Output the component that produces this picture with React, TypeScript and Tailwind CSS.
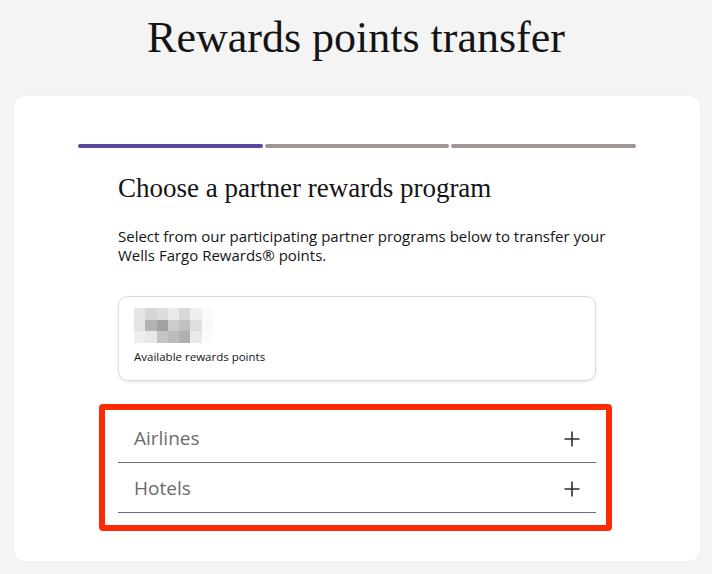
import React from "react";

const blur = [
  ["#e6e6e6", "#d6d6d6", "#dcdcdc", "#eaeaea", "#d8d8d8", "#eeeeee", "#fafafa", "#ffffff"],
  ["#e4e4e4", "#b2b2b2", "#a2a2a2", "#cccccc", "#c0c0c0", "#dedede", "#f8f8f8", "#ffffff"],
  ["#eeeeee", "#e8e8e8", "#c4c4c4", "#bcbcbc", "#b0b0b0", "#eaeaea", "#fcfcfc", "#ffffff"],
];

function Plus() {
  return (
    <svg width="16" height="16" viewBox="0 0 16 16" fill="none">
      <path d="M8 0.5V15.5M0.5 8H15.5" stroke="#2e2e2e" strokeWidth="1.6" />
    </svg>
  );
}

export default function App() {
  return (
    <div className="min-h-[574px] bg-[#f4f4f4] pt-[12px] pb-[12px]">
      <h1
        className="text-center text-[44px] leading-[52px] text-[#141414]"
        style={{ fontFamily: '"Liberation Serif", serif' }}
      >
        Rewards points transfer
      </h1>
      <div className="mt-[32px] ml-[14px] mr-[12px] rounded-[10px] bg-white shadow-[0_0_2px_rgba(0,0,0,0.08)] px-[64px] pt-[48px] pb-[48px]">
        <div className="flex h-[4px] gap-[2px]">
          <span className="flex-1 rounded-full bg-[#5a469c]" />
          <span className="flex-1 rounded-full bg-[#9e9595]" />
          <span className="flex-1 rounded-full bg-[#9e9595]" />
        </div>
        <div className="mx-[40px]">
          <h2
            className="mt-[24px] text-[27px] leading-[32px] text-[#141414]"
            style={{ fontFamily: '"Liberation Serif", serif' }}
          >
            Choose a partner rewards program
          </h2>
          <p
            className="mt-[23px] whitespace-nowrap text-[15px] leading-[19px] text-[#141414]"
            style={{ fontFamily: '"Open Sans", sans-serif' }}
          >
            Select from our participating partner programs below to transfer your
            <br />
            Wells Fargo Rewards® points.
          </p>
          <div className="mt-[31px] rounded-[10px] border border-[#dcdcdc] shadow-[0_1px_3px_rgba(0,0,0,0.12)] pt-[11px] pl-[15px] pb-[16px]">
            <div className="grid h-[35px] w-[90px] grid-cols-8 grid-rows-3">
              {blur.flat().map((c, i) => (
                <span key={i} style={{ backgroundColor: c }} />
              ))}
            </div>
            <div
              className="mt-[7px] text-[11.5px] leading-[14px] text-[#141414]"
              style={{ fontFamily: '"Open Sans", sans-serif' }}
            >
              Available rewards points
            </div>
          </div>
          <div className="relative mt-[32px]" style={{ fontFamily: '"Open Sans", sans-serif' }}>
            <div className="flex h-[50px] items-center justify-between border-b border-[#707070] pl-[16px] pr-[16px] pt-[2px]">
              <span className="text-[19px] text-[#6b6b6b]">Airlines</span>
              <Plus />
            </div>
            <div className="flex h-[50px] items-center justify-between border-b border-[#707070] pl-[16px] pr-[16px] pt-[2px]">
              <span className="text-[19px] text-[#6b6b6b]">Hotels</span>
              <Plus />
            </div>
            <div className="pointer-events-none absolute -top-[9px] -left-[19px] -right-[16px] -bottom-[18px] rounded-[4px] border-[6px] border-[#ff2a00]" />
          </div>
        </div>
      </div>
    </div>
  );
}
